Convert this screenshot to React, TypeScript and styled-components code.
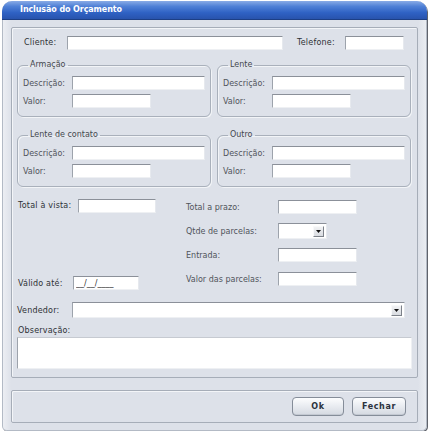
import React from "react";
import styled, { createGlobalStyle } from "styled-components";

const GlobalStyle = createGlobalStyle`
  html, body {
    margin: 0;
    padding: 0;
    background: #ffffff;
  }
  body {
    font-family: "DejaVu Sans", Verdana, sans-serif;
    font-size: 8px;
    color: #3a3d42;
  }
  * {
    box-sizing: border-box;
  }
`;

const App: React.FC = () => {
  return (
    <>
      <GlobalStyle />
      <Window>
        <TitleBar>Inclusão do Orçamento</TitleBar>
        <Body>
          <MainPanel>
            <ClientRow>
              <Label $w={43} $strong>
                Cliente:
              </Label>
              <Input $w={216} />
              <Label $w={48} $strong style={{ marginLeft: 14 }}>
                Telefone:
              </Label>
              <Input $w={59} />
            </ClientRow>

            <Groups $top={10}>
              <Group legend="Armação" />
              <Group legend="Lente" />
            </Groups>
            <Groups $top={13}>
              <Group legend="Lente de contato" />
              <Group legend="Outro" />
            </Groups>

            <Totals>
              <TotalCell>
                <Label $w={60} $strong>
                  Total à vista:
                </Label>
                <Input $w={78} />
              </TotalCell>
              <RightColumn>
                <Line>
                  <Label $w={92}>Total a prazo:</Label>
                  <Input $w={79} />
                </Line>
                <Line>
                  <Label $w={92}>Qtde de parcelas:</Label>
                  <Select $w={49} />
                </Line>
                <Line>
                  <Label $w={92}>Entrada:</Label>
                  <Input $w={79} />
                </Line>
                <Line>
                  <Label $w={92}>Valor das parcelas:</Label>
                  <Input $w={79} />
                </Line>
              </RightColumn>
              <ValidCell>
                <Label $w={55} $strong>
                  Válido até:
                </Label>
                <Input $w={66} defaultValue="__/__/____" readOnly />
              </ValidCell>
            </Totals>

            <Line $top={15}>
              <Label $w={55} $strong>
                Vendedor:
              </Label>
              <Select $w={333} />
            </Line>
            <NoteLabel>Observação:</NoteLabel>
            <Notes />
          </MainPanel>

          <ButtonPanel>
            <Button $w={52}>Ok</Button>
            <Button $w={54}>Fechar</Button>
          </ButtonPanel>
        </Body>
      </Window>
    </>
  );
};

const Group: React.FC<{ legend: string }> = ({ legend }) => (
  <Fieldset>
    <Legend>{legend}</Legend>
    <Line $h={14}>
      <Label $w={49}>Descrição:</Label>
      <Input $w={133} />
    </Line>
    <Line $h={14}>
      <Label $w={49}>Valor:</Label>
      <Input $w={79} />
    </Line>
  </Fieldset>
);

const Select: React.FC<{ $w: number }> = ({ $w }) => (
  <SelectBox $w={$w}>
    <ArrowButton>
      <svg width="5" height="3" viewBox="0 0 5 3">
        <path d="M0 0h5L2.5 3z" fill="#111" />
      </svg>
    </ArrowButton>
  </SelectBox>
);

const Window = styled.div`
  width: 425px;
  height: 430px;
  margin: 1px 0 0 2px;
  display: flex;
  flex-direction: column;
  background: linear-gradient(
    90deg,
    #eceef3 0,
    #dde1e9 8px,
    #dde1e9 calc(100% - 8px),
    #e9ecf1 100%
  );
  border: 1px solid #b3bac5;
  border-top: none;
  border-radius: 10px 10px 5px 5px;
  box-shadow: 1px 1px 0 #5f636b;
`;

const TitleBar = styled.div`
  height: 19px;
  margin: 0 -1px;
  padding-left: 18px;
  border-radius: 10px 10px 0 0;
  background: linear-gradient(
    180deg,
    #89abe6 0,
    #4f80d6 30%,
    #2f62c4 65%,
    #2853ad 100%
  );
  border-bottom: 1px solid #1d3f85;
  color: #ffffff;
  font-weight: bold;
  font-size: 8px;
  letter-spacing: -0.1px;
  line-height: 18px;
`;

const Body = styled.div`
  flex: 1;
  display: flex;
  flex-direction: column;
  gap: 12px;
  padding: 7px 8px 7px 8px;
`;

const MainPanel = styled.div`
  height: 351px;
  display: flex;
  flex-direction: column;
  padding: 7px 5px 8px;
  border: 1px solid #a6adb8;
  border-radius: 2px;
  box-shadow: inset 1px 1px 0 #f3f5f8;
`;

const ClientRow = styled.div`
  display: flex;
  align-items: center;
  height: 15px;
  padding-left: 7px;
`;

const Label = styled.span<{ $w: number; $strong?: boolean }>`
  width: ${(p) => p.$w}px;
  flex: none;
  white-space: nowrap;
  font-size: 8px;
  color: ${(p) => (p.$strong ? "#2e3136" : "#50545b")};
  letter-spacing: ${(p) => (p.$strong ? "0.2px" : "0")};
`;

const Input = styled.input<{ $w: number }>`
  width: ${(p) => p.$w}px;
  height: 14px;
  flex: none;
  padding: 0 2px;
  margin: 0;
  background: #ffffff;
  border: 1px solid;
  border-color: #8b9099 #e6e9ee #eef0f3 #9da3ac;
  font-family: "DejaVu Sans", Verdana, sans-serif;
  font-size: 8px;
  color: #333;
  outline: none;
`;

const Groups = styled.div<{ $top: number }>`
  display: grid;
  grid-template-columns: 193px 194px;
  column-gap: 7px;
  margin-top: ${(p) => p.$top}px;
`;

const Fieldset = styled.fieldset`
  margin: 0;
  padding: 6px 5px 8px;
  border: 1px solid #a9b0bb;
  border-radius: 6px;
  box-shadow: 1px 1px 0 #f2f4f7, inset 1px 1px 0 #f2f4f7;
  display: flex;
  flex-direction: column;
  gap: 4px;
`;

const Legend = styled.legend`
  margin-left: 5px;
  padding: 0 2px;
  font-size: 8px;
  line-height: 10px;
  color: #44484e;
`;

const Line = styled.div<{ $top?: number; $h?: number }>`
  display: flex;
  align-items: center;
  height: ${(p) => p.$h ?? 16}px;
  margin-top: ${(p) => p.$top ?? 0}px;
`;

const Totals = styled.div`
  display: grid;
  grid-template-columns: 169px 1fr;
  grid-template-rows: auto;
  margin-top: 12px;
`;

const TotalCell = styled.div`
  grid-column: 1;
  grid-row: 1;
  display: flex;
  align-items: flex-start;
  padding-left: 1px;
  height: 16px;
  ${Label} {
    line-height: 14px;
  }
`;

const RightColumn = styled.div`
  grid-column: 2;
  grid-row: 1;
  display: flex;
  flex-direction: column;
  gap: 8px;
`;

const ValidCell = styled.div`
  grid-column: 1;
  grid-row: 1;
  align-self: end;
  display: flex;
  align-items: center;
  padding-left: 1px;
  margin-bottom: -4px;
  height: 16px;
`;

const SelectBox = styled.div<{ $w: number }>`
  width: ${(p) => p.$w}px;
  height: 16px;
  flex: none;
  display: flex;
  align-items: center;
  justify-content: flex-end;
  padding-right: 2px;
  background: #ffffff;
  border: 1px solid;
  border-color: #8b9099 #e6e9ee #eef0f3 #9da3ac;
`;

const ArrowButton = styled.div`
  width: 11px;
  height: 11px;
  display: flex;
  align-items: center;
  justify-content: center;
  background: linear-gradient(180deg, #f1f2f4, #d9dce1);
  border: 1px solid;
  border-color: #f8f9fa #7d828a #7d828a #f8f9fa;
`;

const NoteLabel = styled.div`
  margin-top: 8px;
  padding-left: 1px;
  font-size: 8px;
  line-height: 10px;
  color: #2e3136;
  letter-spacing: 0.2px;
`;

const Notes = styled.div`
  margin-top: 1px;
  height: 32px;
  background: #ffffff;
  border: 1px solid;
  border-color: #c6cad1 #eef0f3 #eef0f3 #9da3ac;
`;

const ButtonPanel = styled.div`
  height: 33px;
  display: flex;
  align-items: center;
  justify-content: flex-end;
  gap: 8px;
  padding-right: 11px;
  border: 1px solid #a6adb8;
  border-radius: 2px;
  box-shadow: inset 1px 1px 0 #f3f5f8;
`;

const Button = styled.button<{ $w: number }>`
  width: ${(p) => p.$w}px;
  height: 19px;
  padding: 0;
  border: 1px solid #858d99;
  border-radius: 4px;
  background: linear-gradient(180deg, #fcfdfe 0, #e8ebf0 50%, #d4d9e1 100%);
  box-shadow: inset 0 -1px 0 #c3c9d2;
  font-family: "DejaVu Sans", Verdana, sans-serif;
  font-weight: bold;
  font-size: 8px;
  letter-spacing: 0.6px;
  color: #2b323d;
`;

export default App;
